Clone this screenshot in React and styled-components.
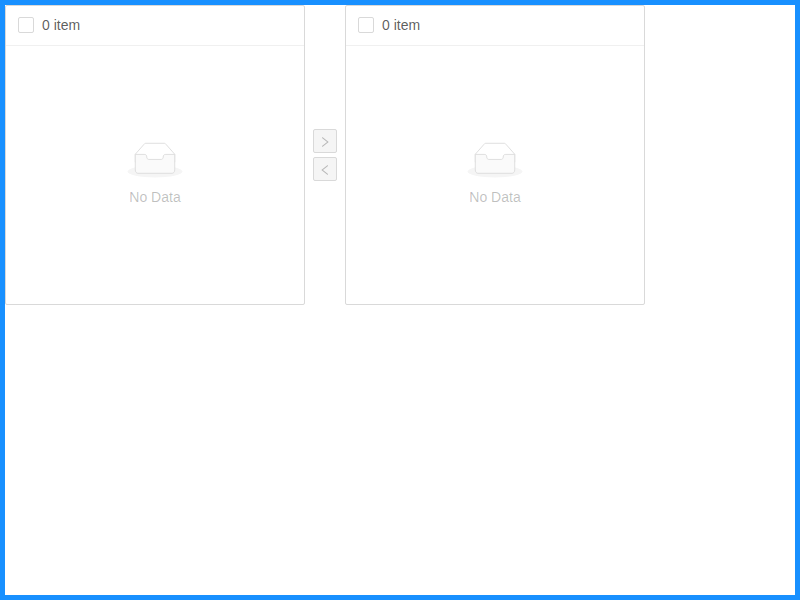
import React from "react";
import styled, { createGlobalStyle } from "styled-components";

const GlobalStyle = createGlobalStyle`
  *, *::before, *::after { box-sizing: border-box; }
  body {
    margin: 0;
    background: #fff;
    color: rgba(0, 0, 0, 0.65);
    font-family: "Liberation Sans", Arial, sans-serif;
    font-size: 14px;
    line-height: 22px;
  }
`;

const Page = styled.main`
  min-height: 100vh;
  border: 5px solid #1890ff;
`;

const Transfer = styled.div`
  display: flex;
  align-items: center;
  gap: 8px;
`;

const Panel = styled.section`
  display: flex;
  flex-direction: column;
  flex: 0 1 300px;
  min-width: 0;
  min-height: 300px;
  border: 1px solid #d9d9d9;
  border-radius: 2px;
`;

const PanelHeader = styled.header`
  padding: 8px 12px 9px;
  border-bottom: 1px solid #f0f0f0;
`;

const SelectAll = styled.label`
  display: flex;
  align-items: center;
  gap: 8px;
`;

const Checkbox = styled.input`
  appearance: none;
  flex: none;
  width: 16px;
  height: 16px;
  margin: 0;
  background: #fff;
  border: 1px solid #d9d9d9;
  border-radius: 2px;

  &:checked {
    background: #1890ff;
    border-color: #1890ff;
  }
`;

const EmptyState = styled.div`
  display: flex;
  flex: 1;
  flex-direction: column;
  align-items: center;
  justify-content: center;
  gap: 8px;
  color: rgba(0, 0, 0, 0.25);
`;

const EmptyText = styled.p`
  margin: 0;
`;

const Operations = styled.div`
  display: flex;
  flex-direction: column;
  gap: 4px;
`;

const MoveButton = styled.button`
  display: flex;
  align-items: center;
  justify-content: center;
  width: 24px;
  height: 24px;
  padding: 2px 0 0;
  color: rgba(0, 0, 0, 0.25);
  background: #f5f5f5;
  border: 1px solid #d9d9d9;
  border-radius: 2px;
`;

const arrows = {
  right:
    "M765.7 486.8L314.9 134.7A7.97 7.97 0 00302 141v77.3c0 4.9 2.3 9.6 6.1 12.6l360 281.1-360 281.1c-3.9 3-6.1 7.7-6.1 12.6V883c0 6.7 7.7 10.4 12.9 6.3l450.8-352.1a31.96 31.96 0 000-50.4z",
  left:
    "M724 218.3V141c0-6.7-7.7-10.4-12.9-6.3L260.3 486.8a31.86 31.86 0 000 50.3l450.8 352.1c5.3 4.1 12.9.4 12.9-6.3v-77.3c0-4.9-2.3-9.6-6.1-12.6l-360-281 360-281.1c3.8-3 6.1-7.7 6.1-12.6z",
};

function ArrowIcon({ direction }) {
  return (
    <svg viewBox="64 64 896 896" width="12" height="12" fill="currentColor" aria-hidden="true">
      <path d={arrows[direction]} />
    </svg>
  );
}

function EmptyTray() {
  return (
    <svg width="56" height="36" viewBox="0 0 64 42" aria-hidden="true">
      <g transform="translate(0 1.5)" fill="none" fillRule="evenodd">
        <ellipse fill="#f5f5f5" cx="32" cy="33" rx="32" ry="7" />
        <g fillRule="nonzero" stroke="#d9d9d9">
          <path d="M55 12.76L44.854 1.258C44.367.474 43.656 0 42.907 0H21.093c-.749 0-1.46.474-1.947 1.257L9 12.761V22h46v-9.24z" />
          <path
            d="M41.613 15.931c0-1.605.994-2.93 2.227-2.931H55v18.137C55 33.26 53.68 35 52.05 35h-40.1C10.32 35 9 33.259 9 31.137V13h11.16c1.233 0 2.227 1.323 2.227 2.928v.022c0 1.605 1.005 2.901 2.237 2.901h14.752c1.232 0 2.237-1.308 2.237-2.913v-.007z"
            fill="#fafafa"
          />
        </g>
      </g>
    </svg>
  );
}

function TransferList({ name, count = 0 }) {
  return (
    <Panel aria-label={name}>
      <PanelHeader>
        <SelectAll>
          <Checkbox type="checkbox" />
          <span>{count} item</span>
        </SelectAll>
      </PanelHeader>
      <EmptyState>
        <EmptyTray />
        <EmptyText>No Data</EmptyText>
      </EmptyState>
    </Panel>
  );
}

export default function App() {
  return (
    <>
      <GlobalStyle />
      <Page>
        <Transfer>
          <TransferList name="Source" />
          <Operations>
            <MoveButton type="button" disabled aria-label="Move right">
              <ArrowIcon direction="right" />
            </MoveButton>
            <MoveButton type="button" disabled aria-label="Move left">
              <ArrowIcon direction="left" />
            </MoveButton>
          </Operations>
          <TransferList name="Target" />
        </Transfer>
      </Page>
    </>
  );
}
